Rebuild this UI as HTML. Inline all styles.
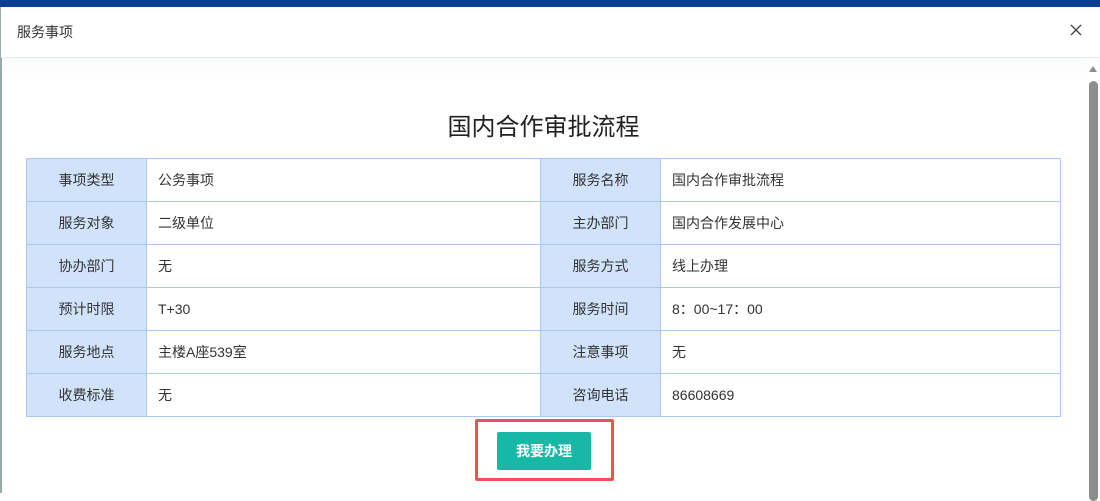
<!DOCTYPE html>
<html><head><meta charset="utf-8"><style>
*{margin:0;padding:0;box-sizing:border-box}
body{width:1100px;height:493px;overflow:hidden;background:#fff;font-family:"Liberation Sans","Noto Sans CJK SC",sans-serif;position:relative}
.topbar{position:absolute;left:0;top:0;width:1100px;height:7px;background:#0b3d91}
.left{position:absolute;left:0;top:7px;width:2px;height:486px;background:#9aa}
.hdr{position:absolute;left:1px;top:7px;width:1099px;height:51px;border-bottom:1px solid #e8e8e8;background:#fff}
.hdr span{position:absolute;left:16px;top:15px;font-size:14px;color:#333}
.close{position:absolute;left:1070px;top:24px}
.shade{position:absolute;left:2px;top:58px;width:1085px;height:24px;background:linear-gradient(#fafbfc,#fff)}
.sb{position:absolute;left:1089px;top:81px;width:9px;height:420px;background:#8c8c8c;border-radius:5px}
.arr{position:absolute;left:1089px;top:66px;width:0;height:0;border-left:4.5px solid transparent;border-right:4.5px solid transparent;border-bottom:6px solid #8c8c8c}
h1{position:absolute;left:0;width:1087px;top:107px;text-align:center;font-size:24px;font-weight:normal;color:#222}
table{position:absolute;left:26px;top:158px;width:1035px;border-collapse:collapse;font-size:14px;color:#333}
td{border:1px solid #a9c8f5;height:43px;padding:0 11px}
td.l{background:#d0e3fb;text-align:center;width:120px;padding:0}
td.v1{width:394px}
.red{position:absolute;left:475px;top:419px;width:139px;height:62px;border:3px solid #f05252;border-radius:2px}
.btn{position:absolute;left:497px;top:432px;width:94px;height:38px;background:#17b8a6;border-radius:2px;color:#fff;font-size:14px;font-weight:bold;text-align:center;line-height:38px}
</style></head><body>
<div class="topbar"></div><div class="left"></div>
<div class="hdr"><span>服务事项</span></div>
<svg class="close" width="12" height="12" viewBox="0 0 12 12"><path d="M1 1L11 11M11 1L1 11" stroke="#444" stroke-width="1.3"/></svg>
<div class="shade"></div>
<div class="arr"></div><div class="sb"></div>
<h1>国内合作审批流程</h1>
<table>
<tr><td class="l">事项类型</td><td class="v1">公务事项</td><td class="l">服务名称</td><td>国内合作审批流程</td></tr>
<tr><td class="l">服务对象</td><td class="v1">二级单位</td><td class="l">主办部门</td><td>国内合作发展中心</td></tr>
<tr><td class="l">协办部门</td><td class="v1">无</td><td class="l">服务方式</td><td>线上办理</td></tr>
<tr><td class="l">预计时限</td><td class="v1">T+30</td><td class="l">服务时间</td><td>8：00~17：00</td></tr>
<tr><td class="l">服务地点</td><td class="v1">主楼A座539室</td><td class="l">注意事项</td><td>无</td></tr>
<tr><td class="l">收费标准</td><td class="v1">无</td><td class="l">咨询电话</td><td>86608669</td></tr>
</table>
<div class="red"></div>
<div class="btn">我要办理</div>
</body></html>
